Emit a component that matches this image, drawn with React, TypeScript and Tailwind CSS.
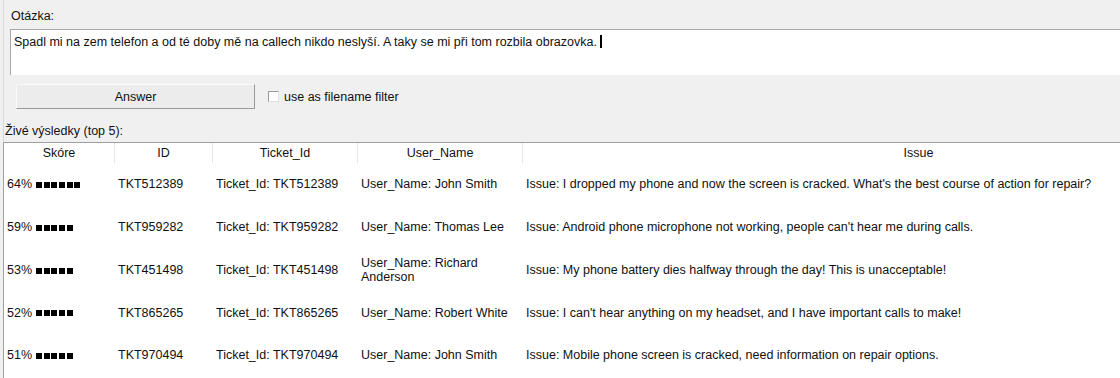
const rows = [
  {
    score: 64,
    bars: 6,
    id: "TKT512389",
    user: "John Smith",
    issue: "I dropped my phone and now the screen is cracked. What's the best course of action for repair?",
  },
  {
    score: 59,
    bars: 5,
    id: "TKT959282",
    user: "Thomas Lee",
    issue: "Android phone microphone not working, people can't hear me during calls.",
  },
  {
    score: 53,
    bars: 5,
    id: "TKT451498",
    user: "Richard Anderson",
    issue: "My phone battery dies halfway through the day! This is unacceptable!",
  },
  {
    score: 52,
    bars: 5,
    id: "TKT865265",
    user: "Robert White",
    issue: "I can't hear anything on my headset, and I have important calls to make!",
  },
  {
    score: 51,
    bars: 5,
    id: "TKT970494",
    user: "John Smith",
    issue: "Mobile phone screen is cracked, need information on repair options.",
  },
];

const headers = ["Skóre", "ID", "Ticket_Id", "User_Name", "Issue"];
const cols = "grid grid-cols-[110px_98px_145px_165px_792px]";

function Bars({ n }: { n: number }) {
  return (
    <span className="ml-[4px] inline-flex gap-[1.7px] align-middle">
      {Array.from({ length: n }).map((_, i) => (
        <span key={i} className="inline-block h-[6px] w-[6px] bg-black" />
      ))}
    </span>
  );
}

export default function App() {
  return (
    <div className="h-[378px] w-[1120px] overflow-hidden bg-[#f0f0f0] pl-[3px] font-['Liberation_Sans',Arial,sans-serif] text-[12.5px] leading-[14px] text-[#111]">
      <div className="h-[142px] border-l border-[#d8d8d8]">
        <div className="ml-[7px] pt-[9px]">Otázka:</div>
        <div className="ml-[6px] mt-[6px] h-[46px] border-l border-t border-[#a8a8a8] bg-white pl-[3px] pt-[3px]">
          Spadl mi na zem telefon a od té doby mě na callech nikdo neslyší. A taky se mi při tom rozbila obrazovka.{" "}
          <span className="inline-block h-[13px] w-[2px] translate-y-[2px] bg-black" />
        </div>
        <div className="ml-[12px] mt-[9px] flex items-center">
          <div className="flex h-[25px] w-[239px] items-center justify-center border border-b-[#9a9a9a] border-l-[#fafafa] border-r-[#9a9a9a] border-t-[#fafafa] bg-[#ececec]">
            Answer
          </div>
          <div className="ml-[13px] h-[11px] w-[11px] border border-b-[#e0e0e0] border-l-[#9a9a9a] border-r-[#e0e0e0] border-t-[#9a9a9a] bg-white" />
          <span className="ml-[5px]">use as filename filter</span>
        </div>
        <div className="ml-[1px] mt-[15px]">Živé výsledky (top 5):</div>
      </div>
      <div className="h-[236px] overflow-hidden border-l border-t border-[#a0a0a0] bg-white">
        <div className={`${cols} h-[20px] items-center`}>
          {headers.map((h, i) => (
            <div
              key={h}
              className={`flex h-full items-center justify-center ${i > 0 ? "border-l border-[#e6e6e6]" : ""}`}
            >
              {h}
            </div>
          ))}
        </div>
        {rows.map((r) => (
          <div key={r.id} className={`${cols} h-[42.75px] items-center`}>
            <div className="pl-[3px]">
              {r.score}%<Bars n={r.bars} />
            </div>
            <div className="pl-[4px]">{r.id}</div>
            <div className="pl-[4px]">Ticket_Id: {r.id}</div>
            <div className="pl-[4px] pr-[6px]">User_Name: {r.user}</div>
            <div className="whitespace-nowrap pl-[4px]">Issue: {r.issue}</div>
          </div>
        ))}
      </div>
    </div>
  );
}
